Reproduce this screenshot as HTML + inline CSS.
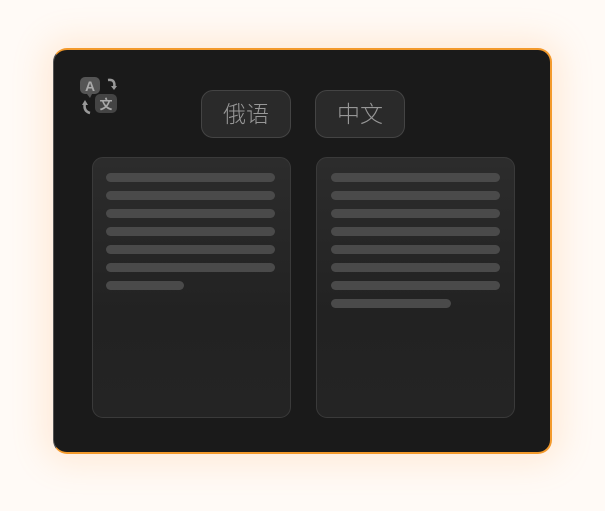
<!DOCTYPE html>
<html><head><meta charset="utf-8"><style>
html,body{margin:0;padding:0}
body{width:605px;height:511px;background:#fffaf6;position:relative;overflow:hidden;font-family:"Liberation Sans","Noto Sans CJK SC",sans-serif}
.card{position:absolute;left:53px;top:48px;width:496px;height:402px;background:#1a1a1a;border-radius:14px;border:1px solid #555;border-top:2px solid #f39a2c;border-right:2px solid #f39a2c;border-bottom:2px solid #f39a2c;box-shadow:0 0 34px 8px rgba(255,170,90,0.2)}
.btn{position:absolute;top:90px;height:46px;width:88px;border:1px solid #444;border-radius:12px;background:#2a2a2a;color:#979797;font-size:23px;font-weight:300;line-height:46px;text-align:center}
.panel{position:absolute;top:157px;width:197px;height:259px;border:1px solid #3a3a3a;border-radius:11px;background:linear-gradient(180deg,#2c2c2c 0%,#222 60%,#242424 100%)}
.bar{position:absolute;left:13px;height:9px;border-radius:5px;background:#4a4a4a}
</style></head><body>
<div class="card"></div>
<svg style="position:absolute;left:78px;top:75px" width="44" height="42" viewBox="0 0 44 42">
<rect x="2" y="2" width="20" height="17" rx="5" fill="#555"/>
<path d="M9 19 L12 23 L14 19Z" fill="#555"/>
<text x="12" y="16" font-size="14" font-weight="bold" fill="#aaa" text-anchor="middle" font-family="Liberation Sans">A</text>
<rect x="17" y="19" width="22" height="19" rx="5" fill="#444"/>
<text x="28" y="34" font-size="13" font-weight="bold" fill="#aaa" text-anchor="middle" font-family="Noto Sans CJK SC">文</text>
<path d="M30 5 Q38 4 36 13" stroke="#999" stroke-width="2.5" fill="none"/>
<path d="M33 11 L36 15 L39 11Z" fill="#999"/>
<path d="M12 38 Q5 36 7 28" stroke="#999" stroke-width="2.5" fill="none"/>
<path d="M4 30 L7 25 L10 30Z" fill="#999"/>
</svg>
<div class="btn" style="left:201px">俄语</div>
<div class="btn" style="left:315px">中文</div>
<div class="panel" style="left:92px">
<div class="bar" style="top:15px;width:169px"></div>
<div class="bar" style="top:33px;width:169px"></div>
<div class="bar" style="top:51px;width:169px"></div>
<div class="bar" style="top:69px;width:169px"></div>
<div class="bar" style="top:87px;width:169px"></div>
<div class="bar" style="top:105px;width:169px"></div>
<div class="bar" style="top:123px;width:78px"></div>
</div>
<div class="panel" style="left:316px">
<div class="bar" style="top:15px;width:169px;left:14px"></div>
<div class="bar" style="top:33px;width:169px;left:14px"></div>
<div class="bar" style="top:51px;width:169px;left:14px"></div>
<div class="bar" style="top:69px;width:169px;left:14px"></div>
<div class="bar" style="top:87px;width:169px;left:14px"></div>
<div class="bar" style="top:105px;width:169px;left:14px"></div>
<div class="bar" style="top:123px;width:169px;left:14px"></div>
<div class="bar" style="top:141px;width:120px;left:14px"></div>
</div>
</body></html>
